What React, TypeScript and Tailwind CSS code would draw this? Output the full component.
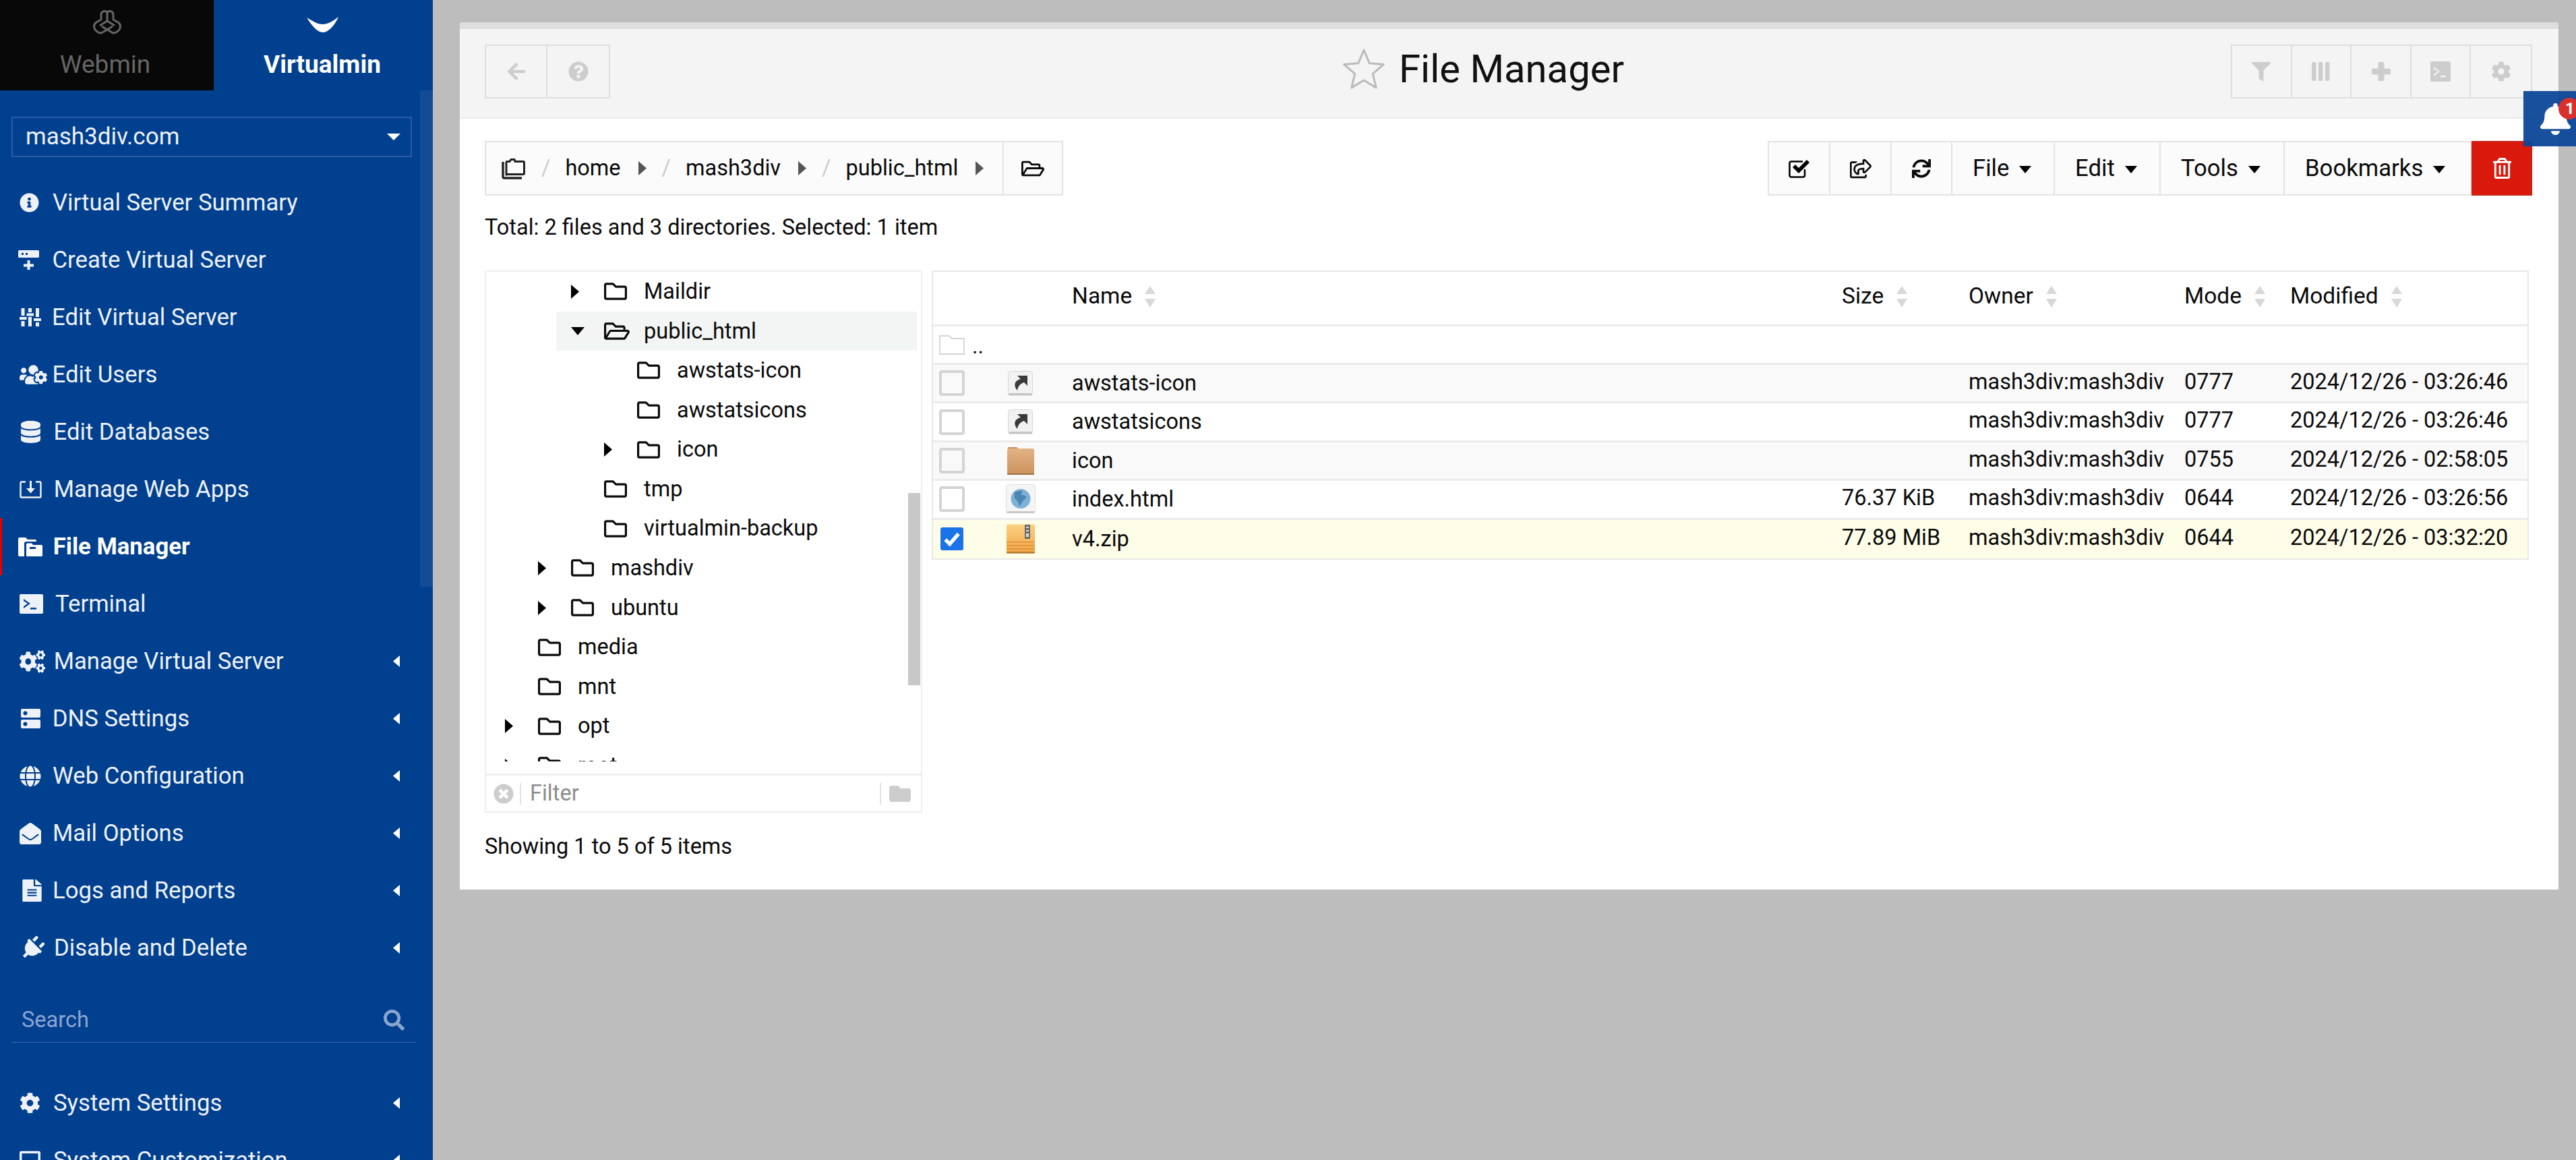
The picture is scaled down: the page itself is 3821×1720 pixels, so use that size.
// App.tsx
import type { ReactNode } from 'react'
import {
  FaArrowLeft,
  FaBell,
  FaCog,
  FaCogs,
  FaDatabase,
  FaDesktop,
  FaEnvelopeOpen,
  FaFileAlt,
  FaFilter,
  FaFolder,
  FaGlobe,
  FaInfoCircle,
  FaPlug,
  FaQuestionCircle,
  FaRegFolder,
  FaRegFolderOpen,
  FaRegShareSquare,
  FaRegTrashAlt,
  FaSearch,
  FaSync,
  FaTimesCircle,
  FaUsersCog,
} from 'react-icons/fa'

function WebminLogo() {
  return (
    <svg viewBox="0 0 44 39" className="w-[44px] h-[39px]" fill="none" stroke="#666" strokeWidth="3" strokeLinejoin="round">
      <path d="M22 4C20 0 13 1 13 7v7l-7 4c-5 3-4 9-1 12 3 3 7 5 10 3l7-4 7 4c3 2 7 0 10-3 3-3 4-9-1-12l-7-4V7c0-6-7-7-9-3z" />
      <path d="M22 5v10M11 23l11-7 11 7M22 29l-8-5M22 29l8-5" />
    </svg>
  )
}

function VirtualminLogo() {
  return (
    <svg viewBox="0 0 47 23" className="w-[47px] h-[23px]" fill="#fff">
      <path d="M0 1c10 6 16 10 23.5 10S38 7 47 0C43 10 33 23 24 23S6 11 0 1z" />
    </svg>
  )
}

function CreateServerIcon() {
  return (
    <svg viewBox="0 0 31 29" className="w-[31px] h-[29px] -ml-[2px]" fill="currentColor">
      <path fillRule="evenodd" d="M1.5 0h28A1.5 1.5 0 0 1 31 1.5v8a1.5 1.5 0 0 1-1.5 1.5h-28A1.5 1.5 0 0 1 0 9.5v-8A1.5 1.5 0 0 1 1.5 0zM5 4v3h3V4H5zm6 0v3h3V4h-3z" />
      <path d="M13.5 15h4v5.5H23v4h-5.5V29h-4v-4.5H8v-4h5.5z" />
    </svg>
  )
}

function SlidersIcon() {
  return (
    <svg viewBox="0 0 32 27" className="w-[32px] h-[27px]" fill="currentColor">
      <path d="M2.5 0h5v11h-5zM2.5 19h5v8h-5zM0 13h10.5v4H0z" />
      <path d="M13 0h5v6h-5zM13 13h5v14h-5zM10.5 7.5H21v4H10.5z" />
      <path d="M24 0h5v13h-5zM24 21h5v6h-5zM21 15h11v4H21z" />
    </svg>
  )
}

function WebAppsIcon() {
  return (
    <svg viewBox="0 0 33 26" className="w-[33px] h-[26px]" fill="none" stroke="currentColor" strokeWidth="2.4">
      <path d="M9 1.5H3A1.5 1.5 0 0 0 1.5 3v20A1.5 1.5 0 0 0 3 24.5h27a1.5 1.5 0 0 0 1.5-1.5V3A1.5 1.5 0 0 0 30 1.5h-6" />
      <path d="M16.5 0v12" strokeWidth="3" />
      <path d="M10 11h13l-6.5 7.500z" fill="currentColor" stroke="none" />
    </svg>
  )
}

function FileManagerIcon() {
  return (
    <svg viewBox="0 0 36 28" className="w-[36px] h-[28px]" fill="currentColor">
      <path d="M0 2a2 2 0 0 1 2-2h9l3 3h11a2 2 0 0 1 2 2v1H12a3 3 0 0 0-3 3v19H2a2 2 0 0 1-2-2z" />
      <path fillRule="evenodd" d="M12 10a1.5 1.5 0 0 1 1.5-1.5H20l2 2.5h12.5A1.5 1.5 0 0 1 36 12.5v14a1.5 1.5 0 0 1-1.5 1.5h-21a1.5 1.5 0 0 1-1.5-1.5zM17 14v3h9v-3z" />
    </svg>
  )
}

function TerminalBoxIcon() {
  return (
    <svg viewBox="0 0 35 29" className="w-[35px] h-[29px]" fill="currentColor">
      <path
        fillRule="evenodd"
        d="M2 0h31a2 2 0 0 1 2 2v25a2 2 0 0 1-2 2H2a2 2 0 0 1-2-2V2a2 2 0 0 1 2-2zm4 7v3l6 4-6 4v3l10-7zm10 13v2.5h9V20z"
      />
    </svg>
  )
}

function TerminalSquareIcon() {
  return (
    <svg viewBox="0 0 30 30" className="w-[30px] h-[30px]" fill="currentColor">
      <path fillRule="evenodd" d="M2 0h26a2 2 0 0 1 2 2v26a2 2 0 0 1-2 2H2a2 2 0 0 1-2-2V2a2 2 0 0 1 2-2zm3 8v3l6 4-6 4v3l9-7zm10 13v2.5h8V21z" />
    </svg>
  )
}

function ColumnsIcon() {
  return (
    <svg viewBox="0 0 27 28" className="w-[27px] h-[28px]" fill="currentColor">
      <rect x="0" y="0" width="6.5" height="28" rx="2" />
      <rect x="10" y="0" width="6.5" height="28" rx="2" />
      <rect x="20" y="0" width="6.5" height="28" rx="2" />
    </svg>
  )
}

function PlusIcon() {
  return (
    <svg viewBox="0 0 28 28" className="w-[28px] h-[28px]" fill="currentColor">
      <rect x="9.5" y="0" width="9" height="28" rx="2" />
      <rect x="0" y="9.5" width="28" height="9" rx="2" />
    </svg>
  )
}

function StarOutline() {
  return (
    <svg viewBox="0 0 64 62" className="w-[64px] h-[62px] fill-none stroke-[#bbb] stroke-[3]">
      <path strokeLinejoin="round" d="M32 2l8.200 19.700 21.300 1.700-16.200 13.900L50.200 58.100 32 47 13.800 58.100l4.900-20.800L2.500 23.400l21.300-1.700z" />
    </svg>
  )
}

function CheckSquareIcon() {
  return (
    <svg viewBox="0 0 32 30" className="w-[32px] h-[30px]">
      <path d="M24 16v9a2.5 2.500 0 0 1-2.500 2.500H4A2.500 2.500 0 0 1 1.500 25V7A2.500 2.500 0 0 1 4 4.500h17" fill="none" stroke="#000" strokeWidth="2.6" />
      <path d="M6 13l4-4 5 5L27 2l4 4-16 16z" fill="#000" />
    </svg>
  )
}

function DnsIcon() {
  return (
    <svg viewBox="0 0 29 29" className="w-[29px] h-[29px] ml-[2px]" fill="currentColor">
      <path fillRule="evenodd" d="M2 0h25a2 2 0 0 1 2 2v9a2 2 0 0 1-2 2H2a2 2 0 0 1-2-2V2a2 2 0 0 1 2-2zm4.5 3.5a3 3 0 1 0 0 6 3 3 0 0 0 0-6z" />
      <path fillRule="evenodd" d="M2 16h25a2 2 0 0 1 2 2v9a2 2 0 0 1-2 2H2a2 2 0 0 1-2-2v-9a2 2 0 0 1 2-2zm4.5 3.5a3 3 0 1 0 0 6 3 3 0 0 0 0-6z" />
    </svg>
  )
}

function BreadcrumbRootIcon() {
  return (
    <svg viewBox="0 0 36 32" className="w-[36px] h-[32px]" fill="none" stroke="#222" strokeWidth="3">
      <path d="M7 25V7a1.5 1.5 0 0 1 1.5-1.5H12l2-3h5l1 3h12a1.5 1.5 0 0 1 1.5 1.5v16a1.5 1.5 0 0 1-1.5 1.5H8.500A1.5 1.5 0 0 1 7 25z" />
      <path d="M2 6v22a2 2 0 0 0 2 2h26" strokeWidth="3.4" />
    </svg>
  )
}

function CaretRight({ className = 'fill-black' }: { className?: string }) {
  return (
    <svg viewBox="0 0 12 21" className={`w-[12px] h-[21px] ${className}`}>
      <path d="M0 0l12 10.5L0 21z" />
    </svg>
  )
}

function CaretDown() {
  return (
    <svg viewBox="0 0 20 12" className="w-[20px] h-[12px] fill-black">
      <path d="M0 0h20L10 12z" />
    </svg>
  )
}

function SortArrows() {
  return (
    <svg viewBox="0 0 16 32" className="w-[16px] h-[32px] fill-[#d8d8d8] ml-[19px]">
      <path d="M8 0l8 12H0zM0 19h16L8 32z" />
    </svg>
  )
}

function ShortcutIcon() {
  return (
    <svg viewBox="0 0 37 37" className="w-[37px] h-[37px] shrink-0">
      <rect x="0.5" y="0.5" width="36" height="35" rx="3" fill="#f2f2f2" stroke="#d6d6d6" />
      <rect x="1" y="33" width="35" height="3.5" rx="1.5" fill="#c4c4c4" />
      <path d="M14 7h15v15l-5-5c-6 2-9 6-10 12-5-6-6-14 5-17z" fill="#3a3a3a" />
    </svg>
  )
}

function FolderFileIcon() {
  return (
    <svg viewBox="0 0 42 44" className="w-[42px] h-[44px] shrink-0">
      <defs>
        <linearGradient id="folderFill" x1="0" y1="0" x2="0" y2="1">
          <stop offset="0" stopColor="#e2b384" />
          <stop offset="1" stopColor="#cc925c" />
        </linearGradient>
      </defs>
      <path d="M2 3a2 2 0 0 1 2-1h11l4 3h19a2 2 0 0 1 2 2v4H2z" fill="#c48d58" />
      <rect x="1" y="4" width="40" height="39" rx="2.5" fill="url(#folderFill)" />
      <rect x="1" y="41" width="40" height="2" fill="#9e7246" />
    </svg>
  )
}

function HtmlFileIcon() {
  return (
    <svg viewBox="0 0 44 44" className="w-[44px] h-[44px] shrink-0">
      <rect x="0.5" y="0.5" width="43" height="42" rx="4" fill="#f5f5f5" stroke="#e0e0e0" />
      <rect x="1" y="40" width="42" height="3" rx="1.5" fill="#c8c8c8" />
      <circle cx="22" cy="21.5" r="14.5" fill="#7fb0d6" />
      <path d="M14 11c4 0 7-2 10-1 2 2-3 4-1 6 3 0 6 0 7 3 0 4-5 4-6 8-2 3-3 5-5 4 0-4-1-6-4-8-3-2-3-8-1-12z" fill="#4a86b4" />
    </svg>
  )
}

function ZipFileIcon() {
  return (
    <svg viewBox="0 0 44 44" className="w-[44px] h-[44px] shrink-0">
      <defs>
        <linearGradient id="zipFill" x1="0" y1="0" x2="0" y2="1">
          <stop offset="0" stopColor="#fdd183" />
          <stop offset="1" stopColor="#f2a445" />
        </linearGradient>
      </defs>
      <rect x="1" y="0.5" width="42" height="43" rx="2.5" fill="url(#zipFill)" />
      <rect x="1" y="26" width="42" height="1.5" fill="#d9913a" />
      <rect x="1" y="31" width="42" height="1.5" fill="#d9913a" />
      <rect x="1" y="36" width="42" height="1.5" fill="#d9913a" />
      <rect x="1" y="41" width="42" height="2.5" fill="#b57a33" />
      <rect x="28" y="1" width="8" height="21" fill="#6c6c6c" />
      <rect x="30" y="4" width="4" height="2" fill="#ddd" />
      <rect x="30" y="9" width="4" height="2" fill="#ddd" />
      <rect x="30" y="14" width="4" height="5" fill="#ddd" />
    </svg>
  )
}

function MiniCheck({ checked }: { checked?: boolean }) {
  if (checked) {
    return (
      <span className="w-[34px] h-[34px] ml-[2px] rounded-[3px] bg-[#1a73e8] flex items-center justify-center">
        <svg viewBox="0 0 24 24" className="w-[26px] h-[26px] fill-none stroke-white stroke-[5]">
          <path d="M3 13l6 6L21 5" />
        </svg>
      </span>
    )
  }
  return <span className="w-[38px] h-[38px] rounded-[4px] border-[4px] border-[#d4d4d4] block" />
}

const navItems: { label: string; icon: ReactNode; box: string; more?: boolean; active?: boolean }[] = [
  { label: 'Virtual Server Summary', icon: <FaInfoCircle size={29} />, box: 'w-[78px]' },
  { label: 'Create Virtual Server', icon: <CreateServerIcon />, box: 'w-[77.5px]' },
  { label: 'Edit Virtual Server', icon: <SlidersIcon />, box: 'w-[77px]' },
  { label: 'Edit Users', icon: <FaUsersCog size={41} />, box: 'w-[77.5px]' },
  { label: 'Edit Databases', icon: <FaDatabase size={33} />, box: 'w-[79.5px]' },
  { label: 'Manage Web Apps', icon: <WebAppsIcon />, box: 'w-[79.7px]' },
  { label: 'File Manager', icon: <FileManagerIcon />, box: 'w-[75.7px]', active: true },
  { label: 'Terminal', icon: <TerminalBoxIcon />, box: 'w-[82px]' },
  { label: 'Manage Virtual Server', icon: <FaCogs size={38} className="scale-y-[1.1]" />, box: 'w-[79.7px]', more: true },
  { label: 'DNS Settings', icon: <DnsIcon />, box: 'w-[77.7px]', more: true },
  { label: 'Web Configuration', icon: <FaGlobe size={32} />, box: 'w-[78px]', more: true },
  { label: 'Mail Options', icon: <FaEnvelopeOpen size={32} />, box: 'w-[78px]', more: true },
  { label: 'Logs and Reports', icon: <FaFileAlt size={33} className="scale-x-[1.15] ml-[2px]" />, box: 'w-[78px]', more: true },
  { label: 'Disable and Delete', icon: <FaPlug size={36} className="rotate-45 ml-[1px]" />, box: 'w-[80px]', more: true },
]

const treeRows: { label: string; depth: string; open?: boolean; arrow?: boolean; selected?: boolean }[] = [
  { label: 'Maildir', depth: 'ml-[104px]', arrow: true },
  { label: 'public_html', depth: 'ml-[104px]', arrow: true, open: true, selected: true },
  { label: 'awstats-icon', depth: 'ml-[153px]' },
  { label: 'awstatsicons', depth: 'ml-[153px]' },
  { label: 'icon', depth: 'ml-[153px]', arrow: true },
  { label: 'tmp', depth: 'ml-[104px]' },
  { label: 'virtualmin-backup', depth: 'ml-[104px]' },
  { label: 'mashdiv', depth: 'ml-[55px]', arrow: true },
  { label: 'ubuntu', depth: 'ml-[55px]', arrow: true },
  { label: 'media', depth: 'ml-[6px]' },
  { label: 'mnt', depth: 'ml-[6px]' },
  { label: 'opt', depth: 'ml-[6px]', arrow: true },
  { label: 'root', depth: 'ml-[6px]', arrow: true },
]

const files = [
  { name: 'awstats-icon', icon: <ShortcutIcon />, size: '', mode: '0777', date: '2024/12/26 - 03:26:46', bg: 'bg-[#f9f9f9]' },
  { name: 'awstatsicons', icon: <ShortcutIcon />, size: '', mode: '0777', date: '2024/12/26 - 03:26:46', bg: 'bg-white' },
  { name: 'icon', icon: <FolderFileIcon />, size: '', mode: '0755', date: '2024/12/26 - 02:58:05', bg: 'bg-[#f9f9f9]' },
  { name: 'index.html', icon: <HtmlFileIcon />, size: '76.37 KiB', mode: '0644', date: '2024/12/26 - 03:26:56', bg: 'bg-white' },
  { name: 'v4.zip', icon: <ZipFileIcon />, size: '77.89 MiB', mode: '0644', date: '2024/12/26 - 03:32:20', bg: 'bg-[#fefde8]', checked: true },
]

const tableCols = 'grid grid-cols-[111px_95px_1142px_188px_320px_157px_1fr]'

function Sidebar() {
  return (
    <aside className="w-[642px] h-full shrink-0 bg-[#013f8f] flex flex-col overflow-hidden">
      <div className="flex h-[134px] shrink-0">
        <div className="w-[317px] bg-[#080808] flex flex-col items-center pt-[15px]">
          <WebminLogo />
          <span className="text-[37px] leading-[40px] mt-[22px] pr-[5px] text-[#666]">Webmin</span>
        </div>
        <div className="flex-1 flex flex-col items-center pt-[25px] pr-[3px]">
          <VirtualminLogo />
          <span className="text-[37px] leading-[40px] mt-[28px] font-bold text-white">Virtualmin</span>
        </div>
      </div>
      <div className="flex flex-1 min-h-0">
        <div className="flex-1 min-w-0 text-[#eef2f8]">
          <div className="ml-[17px] mr-[12px] mt-[39px] h-[60px] border-[2px] border-[#2b5ba3] flex items-center justify-between pl-[19px] pr-[15px] text-[35px] text-[#eef2f8]">
            <span>mash3div.com</span>
            <svg viewBox="0 0 20 10" className="w-[20px] h-[10px] fill-white">
              <path d="M0 0h20L10 10z" />
            </svg>
          </div>
          <nav className="mt-[25px]">
            {navItems.map((item) => (
              <NavRow key={item.label} {...item} />
            ))}
          </nav>
          <div className="mt-[35px] ml-[17px] mr-[6px] h-[63px] border-b-[1px] border-[#3a66aa] flex items-center justify-between pl-[15px] pr-[17px] pb-[4px] text-[#8ba5cf]">
            <span className="text-[32.5px]">Search</span>
            <FaSearch size={31} />
          </div>
          <nav className="mt-[47px]">
            <NavRow label="System Settings" icon={<FaCog size={31} />} box="w-[79px]" more />
            <NavRow label="System Customization" icon={<FaDesktop size={31} />} box="w-[79px]" more />
          </nav>
        </div>
        <div className="w-[19px] h-[736px] bg-[#134b97]" />
      </div>
    </aside>
  )
}

function NavRow({ label, icon, box, more, active }: { label: string; icon: ReactNode; box: string; more?: boolean; active?: boolean }) {
  return (
    <div className={`h-[85px] flex items-center pr-[30px] text-[34.7px] ${active ? 'border-l-[3px] border-[#e60000] font-bold text-white' : ''}`}>
      <span className={`${box} ${active ? 'pl-[24px]' : 'pl-[29px]'} shrink-0 flex items-center`}>{icon}</span>
      <span className="flex-1 whitespace-nowrap">{label}</span>
      {more && (
        <svg viewBox="0 0 10 17" className="w-[10px] h-[17px] fill-white">
          <path d="M10 0v17L0 8.5z" />
        </svg>
      )}
    </div>
  )
}

function TitleBar() {
  const rightIcons = [
    <FaFilter size={28} key="filter" />,
    <ColumnsIcon key="cols" />,
    <PlusIcon key="plus" />,
    <TerminalSquareIcon key="term" />,
    <FaCog size={30} key="cog" />,
  ]
  return (
    <div className="h-[133px] shrink-0 bg-[#f4f4f4] border-b-[2px] border-[#ebebeb] flex items-start pt-[23px] pl-[37px] pr-[39px]">
      <div className="flex h-[80px] border-[2px] border-[#dedede] text-[#cdcdcd]">
        <span className="w-[91px] border-r-[2px] border-[#dedede] flex items-center justify-center">
          <FaArrowLeft size={30} />
        </span>
        <span className="w-[91px] flex items-center justify-center">
          <FaQuestionCircle size={30} />
        </span>
      </div>
      <div className="ml-[1086px] -mt-[7px] flex items-center">
        <StarOutline />
        <span className="ml-[20px] text-[58px] text-[#111]">File Manager</span>
      </div>
      <div className="ml-auto flex h-[80px] border-[2px] border-[#dedede] text-[#cdcdcd]">
        {rightIcons.map((icon, i) => (
          <span key={i} className={`w-[88.6px] flex items-center justify-center ${i < 4 ? 'border-r-[2px] border-[#dedede]' : ''}`}>
            {icon}
          </span>
        ))}
      </div>
    </div>
  )
}

function Breadcrumb() {
  const parts = ['home', 'mash3div', 'public_html']
  return (
    <div className="w-[858px] h-[81px] flex border-[2px] border-[#e3e3e3] bg-[#fbfbfb] text-[32.5px] text-[#0a0a0a]">
      <div className="flex items-center w-[766px] pl-[23px]">
        <BreadcrumbRootIcon />
        {parts.map((part) => (
          <div key={part} className="flex items-center">
            <span className="text-[#ccc] ml-[23px] mr-[22px]">/</span>
            <span>{part}</span>
            <span className="ml-[26px]">
              <CaretRight className="fill-[#555]" />
            </span>
          </div>
        ))}
      </div>
      <div className="flex-1 border-l-[2px] border-[#e3e3e3] flex items-center justify-center">
        <FaRegFolderOpen size={34} />
      </div>
    </div>
  )
}

function Toolbar() {
  const menus = [
    { label: 'File', w: 'w-[152px]' },
    { label: 'Edit', w: 'w-[157px]' },
    { label: 'Tools', w: 'w-[184px]' },
    { label: 'Bookmarks', w: 'w-[277px]' },
  ]
  return (
    <div className="h-[81px] flex border-[2px] border-[#e3e3e3] bg-[#fbfbfb] text-[34.7px] text-[#0a0a0a]">
      <span className="w-[91px] border-r-[2px] border-[#e3e3e3] flex items-center justify-center">
        <CheckSquareIcon />
      </span>
      <span className="w-[91px] border-r-[2px] border-[#e3e3e3] flex items-center justify-center">
        <FaRegShareSquare size={32} />
      </span>
      <span className="w-[90px] border-r-[2px] border-[#e3e3e3] flex items-center justify-center">
        <FaSync size={28} />
      </span>
      {menus.map((menu) => (
        <span key={menu.label} className={`${menu.w} border-r-[2px] border-[#e3e3e3] flex items-center pl-[30px]`}>
          {menu.label}
          <svg viewBox="0 0 18 11" className="w-[18px] h-[11px] ml-[15px] mt-[4px] fill-black">
            <path d="M0 0h18L9 11z" />
          </svg>
        </span>
      ))}
      <span className="flex-1 -my-[2px] -mr-[2px] bg-[#d9190b] border-[1px] border-[#b9231a] flex items-center justify-center text-white">
        <FaRegTrashAlt size={31} />
      </span>
    </div>
  )
}

function FolderTree() {
  return (
    <div className="relative w-[649px] h-[804px] shrink-0 border-[2px] border-[#efefef] flex flex-col text-[32.5px] text-[#0a0a0a]">
      <div className="h-[726px] overflow-hidden">
        {treeRows.map((row) => (
          <div
            key={row.label}
            className={`h-[58.6px] flex items-center mr-[6px] pl-[22px] ${row.depth} ${row.selected ? 'bg-[#f3f5f4]' : ''}`}
          >
            <span className="w-[49px] shrink-0 flex items-center">{row.arrow && (row.open ? <CaretDown /> : <CaretRight />)}</span>
            <span className="w-[59px] shrink-0 flex items-center">
              {row.open ? <FaRegFolderOpen size={38} /> : <FaRegFolder size={34} />}
            </span>
            <span>{row.label}</span>
          </div>
        ))}
      </div>
      <div className="absolute left-[626px] top-[328px] w-[18px] h-[285px] bg-[#c8c8c8]" />
      <div className="mt-auto h-[56px] border-t-[3px] border-[#efefef] flex items-center pl-[11px] pr-[15px] text-[#cdcdcd]">
        <FaTimesCircle size={30} />
        <span className="ml-[9px] h-[32px] w-[2px] bg-[#e3e3e3]" />
        <span className="ml-[13px] flex-1 text-[#8c8c8c]">Filter</span>
        <span className="h-[32px] w-[2px] bg-[#e3e3e3] mr-[12px]" />
        <FaFolder size={32} />
      </div>
    </div>
  )
}

function FileTable() {
  const heads = ['Name', 'Size', 'Owner', 'Mode', 'Modified']
  return (
    <div className="w-[2369px] self-start ml-[14px] border-[2px] border-[#e8e8e8] text-[32.5px] text-[#0a0a0a]">
      <div className={`${tableCols} h-[81px] items-center border-b-[3px] border-[#ebebeb]`}>
        <span />
        <span />
        {heads.map((head) => (
          <span key={head} className="flex items-center pb-[5px] text-[33.5px]">
            {head}
            <SortArrows />
          </span>
        ))}
      </div>
      <div className="h-[57px] border-b-[3px] border-[#ebebeb] flex items-center pl-[9px]">
        <svg viewBox="0 0 38 29" className="w-[38px] h-[29px] fill-white stroke-[#c8c8c8] stroke-[1.4]">
          <path d="M1 1h14l4 4h18v23H1z" />
        </svg>
        <span className="ml-[11px] mt-[3px] text-[32px]">..</span>
      </div>
      {files.map((file, i) => (
        <div
          key={file.name}
          className={`${tableCols} h-[57.4px] items-center ${file.bg} ${i < files.length - 1 ? 'border-b-[3px] border-[#ebebeb]' : ''}`}
        >
          <span className="pl-[9px]">
            <MiniCheck checked={file.checked} />
          </span>
          <span className="w-[37px] flex justify-center">{file.icon}</span>
          <span>{file.name}</span>
          <span className="pb-[4px]">{file.size}</span>
          <span className="pb-[4px]">mash3div:mash3div</span>
          <span className="pb-[4px]">{file.mode}</span>
          <span className="pb-[4px]">{file.date}</span>
        </div>
      ))}
    </div>
  )
}

export default function App() {
  return (
    <div className="relative flex w-[3821px] h-[1720px] overflow-hidden bg-[#bdbdbd] font-['Roboto',sans-serif]">
      <Sidebar />
      <main className="flex-1 min-w-0 pt-[33px] pl-[40px] pr-[26px]">
        <section className="h-[1286px] bg-white border-t-[10px] border-[#dedede] rounded-t-[3px] flex flex-col">
          <TitleBar />
          <div className="pl-[37px] pt-[33px] pr-[39px]">
            <div className="flex justify-between">
              <Breadcrumb />
              <div className="w-[1134px]">
                <Toolbar />
              </div>
            </div>
            <p className="mt-[26px] h-[42px] leading-[42px] text-[32.5px] text-[#0a0a0a]">Total: 2 files and 3 directories. Selected: 1 item</p>
            <div className="flex mt-[43px]">
              <FolderTree />
              <FileTable />
            </div>
            <p className="mt-[29px] text-[32.5px] leading-[42px] text-[#0a0a0a]">Showing 1 to 5 of 5 items</p>
          </div>
        </section>
      </main>
      <div className="absolute right-0 top-[135px] w-[78px] h-[82px] bg-[#0d4799]/95 flex items-center justify-center overflow-hidden">
        <FaBell size={47} className="text-white ml-[16px] scale-x-[1.1]" />
        <span className="absolute left-[52px] top-[10px] w-[32px] h-[32px] rounded-full bg-[#d9302c] text-white text-[24px] font-bold leading-[32px] pl-[10px]">1</span>
      </div>
    </div>
  )
}
